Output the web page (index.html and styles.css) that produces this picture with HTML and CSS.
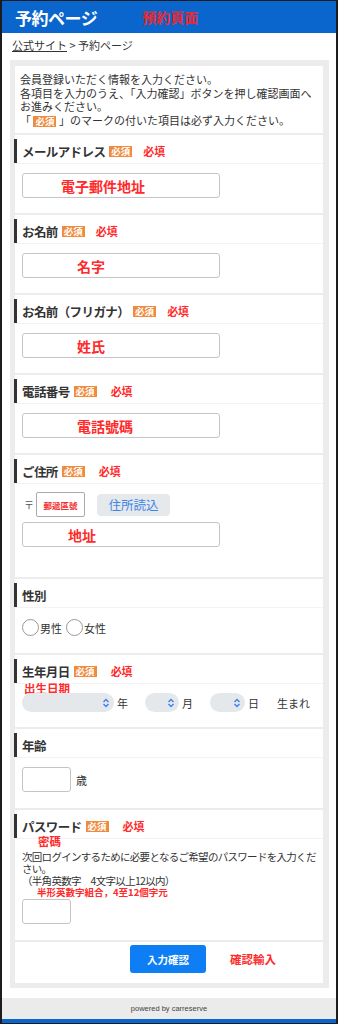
FILE: index.html
```html
<!DOCTYPE html>
<html lang="ja">
<head>
  <meta charset="UTF-8">
  <meta name="viewport" content="width=device-width, initial-scale=1.0">
  <title>予約ページ</title>
  <link rel="stylesheet" href="styles.css">
</head>
<body>
<div class="page">
  <header class="top">
    <h1>予約ページ</h1>
    <span class="note-head">預約頁面</span>
  </header>

  <div class="crumbs"><a href="#">公式サイト</a> &gt; 予約ページ</div>

  <div class="form-wrap">
    <div class="block intro">
      会員登録いただく情報を入力ください。<br>
      各項目を入力のうえ、「入力確認」ボタンを押し確認画面へ<br>
      お進みください。<br>
      「 <span class="req">必須</span> 」のマークの付いた項目は必ず入力ください。
    </div>

    <div class="block">
      <div class="label">メールアドレス<span class="req">必須</span><span class="note">必填</span></div>
      <div class="box"><span class="ph mail">電子郵件地址</span></div>
    </div>

    <div class="block">
      <div class="label">お名前<span class="req">必須</span><span class="note">必填</span></div>
      <div class="box"><span class="ph">名字</span></div>
    </div>

    <div class="block">
      <div class="label">お名前（フリガナ）<span class="req">必須</span><span class="note">必填</span></div>
      <div class="box"><span class="ph">姓氏</span></div>
    </div>

    <div class="block">
      <div class="label">電話番号<span class="req">必須</span><span class="note wide">必填</span></div>
      <div class="box"><span class="ph">電話號碼</span></div>
    </div>

    <div class="block addr">
      <div class="label">ご住所<span class="req">必須</span><span class="note wide">必填</span></div>
      <div class="zip-row">
        <span class="zip-mark">〒</span>
        <div class="zip-box">郵遞區號</div>
        <button class="zip-btn">住所読込</button>
      </div>
      <div class="box"><span class="ph addr-ph">地址</span></div>
    </div>

    <div class="block gender">
      <div class="label">性別</div>
      <div class="radios">
        <span class="radio"></span>男性
        <span class="radio"></span>女性
      </div>
    </div>

    <div class="block birth">
      <div class="label">生年月日<span class="req">必須</span><span class="note wide">必填</span></div>
      <div class="note-line">出生日期</div>
      <div class="date-row">
        <span class="sel year"><svg width="8" height="10" viewBox="0 0 8 10"><path d="M1.5 4 L4 1.5 L6.5 4 M1.5 6 L4 8.5 L6.5 6" fill="none" stroke="#3b82f0" stroke-width="1.4"/></svg></span>年
        <span class="sel month"><svg width="8" height="10" viewBox="0 0 8 10"><path d="M1.5 4 L4 1.5 L6.5 4 M1.5 6 L4 8.5 L6.5 6" fill="none" stroke="#3b82f0" stroke-width="1.4"/></svg></span>月
        <span class="sel day"><svg width="8" height="10" viewBox="0 0 8 10"><path d="M1.5 4 L4 1.5 L6.5 4 M1.5 6 L4 8.5 L6.5 6" fill="none" stroke="#3b82f0" stroke-width="1.4"/></svg></span>日
        <span class="born">生まれ</span>
      </div>
    </div>

    <div class="block age">
      <div class="label">年齢</div>
      <div class="age-row"><div class="box small"></div><span>歳</span></div>
    </div>

    <div class="block pass">
      <div class="label">パスワード<span class="req">必須</span><span class="note wide">必填</span></div>
      <div class="note-line pw">密碼</div>
      <p class="desc">次回ログインするために必要となるご希望のパスワードを入力くだ<br>さい。<br>（半角英数字　4文字以上12以内）</p>
      <div class="note-small">半形英數字組合，4至12個字元</div>
      <div class="box small"></div>
    </div>

    <div class="block submit">
      <button class="confirm">入力確認</button>
      <span class="note-confirm">確認輸入</span>
    </div>
  </div>

  <footer class="foot">powered by carreserve</footer>
  <div class="bottom-bar"></div>
</div>
</body>
</html>
```

FILE: styles.css
```css
body {
  margin: 0;
  font-family: "Noto Sans CJK JP", "Noto Sans", sans-serif;
  color: #333;
  background: #fff;
}
.page {
  width: 334px;
  border-left: 2px solid #1c1c1c;
  border-right: 2px solid #1c1c1c;
  border-top: 1px solid #1c1c1c;
  border-bottom: 1px solid #1c1c1c;
}

/* header */
.top {
  background: #0a66cc;
  height: 32px;
  display: flex;
  align-items: center;
  padding-left: 13px;
}
.top h1 {
  margin: 0;
  color: #fff;
  font-size: 17px;
  font-weight: bold;
  letter-spacing: -0.5px;
}
.note-head {
  margin-left: 45px;
  color: #f0282e;
  font-size: 14px;
  font-weight: bold;
}
.crumbs {
  height: 27px;
  line-height: 25px;
  padding-left: 10px;
  font-size: 11px;
  color: #333;
}
.crumbs a { color: #333; }

/* form */
.form-wrap {
  margin: 0 7px 0 8px;
  background: #ececec;
  padding: 6px 6px 5px 5px;
  display: flex;
  flex-direction: column;
  gap: 2px;
}
.block {
  background: #fff;
  padding: 4px 0 15px 7px;
}
.intro {
  padding: 7px 0 6px 5px;
  font-size: 11px;
  line-height: 13.5px;
}
.label {
  margin-left: -8px;
  border-left: 3px solid #333;
  height: 24px;
  padding-left: 5px;
  display: flex;
  align-items: center;
  font-size: 12.5px;
  font-weight: bold;
  letter-spacing: -0.6px;
  box-shadow: 0 1px 0 #f3f3f3;
  margin-bottom: 10px;
}
.req {
  display: inline-block;
  background: #f08a3c;
  color: #fff;
  font-size: 9.5px;
  font-weight: bold;
  line-height: 11px;
  padding: 0 2px;
  margin-left: 4px;
  letter-spacing: 0;
}
.intro .req { margin-left: 0; }
.note {
  color: #ff2a2a;
  font-size: 11px;
  font-weight: bold;
  margin-left: 11px;
  letter-spacing: 0;
}
.note.wide { margin-left: 14px; }
.box {
  width: 196px;
  height: 23px;
  border: 1px solid #c4c4c4;
  border-radius: 3px;
  display: flex;
  align-items: center;
}
.box.small { width: 47px; }
.ph {
  color: #ff2a2a;
  font-size: 14px;
  font-weight: bold;
  padding-left: 54px;
}
.ph.mail { padding-left: 38px; }
.ph.addr-ph { padding-left: 45px; }

/* address */
.addr { padding-bottom: 30px; }
.addr .label { margin-bottom: 9px; }
.zip-row {
  display: flex;
  align-items: center;
  height: 25px;
  margin-bottom: 5px;
}
.zip-mark {
  font-size: 10px;
  color: #555;
  margin: 0 2px 0 2px;
}
.zip-box {
  width: 47px;
  height: 23px;
  border: 1px solid #aaa;
  border-radius: 2px;
  color: #f03030;
  font-size: 8.5px;
  font-weight: bold;
  display: flex;
  align-items: center;
  justify-content: center;
}
.zip-btn {
  margin-left: 12px;
  width: 73px;
  height: 22px;
  border: 0;
  border-radius: 4px;
  background: #e6e9ec;
  color: #3d86e6;
  font-family: inherit;
  font-size: 12.5px;
  padding: 0;
}

/* gender */
.gender { padding-bottom: 17px; }
.gender .label { margin-bottom: 12px; }
.radios {
  display: flex;
  align-items: center;
  height: 17px;
  font-size: 11px;
}
.radio {
  width: 15px;
  height: 15px;
  border: 1px solid #999;
  border-radius: 50%;
  margin-right: 1px;
}
.radios .radio:nth-of-type(2) { margin-left: 4px; }

/* birth */
.birth .label { margin-bottom: 0; }
.note-line {
  color: #ff2a2a;
  font-size: 11.5px;
  font-weight: bold;
  height: 10px;
  line-height: 10px;
  padding-left: 2px;
}
.date-row {
  display: flex;
  align-items: center;
  height: 19px;
  font-size: 11px;
  white-space: nowrap;
}
.sel {
  height: 19px;
  border-radius: 10px;
  background: #e5e8eb;
  display: flex;
  align-items: center;
  justify-content: flex-end;
  padding-right: 4px;
  margin-right: 3px;
  box-sizing: border-box;
}
.sel.year { width: 92px; }
.sel.month { width: 34px; margin-left: 17px; }
.sel.day { width: 35px; margin-left: 17px; }
.born { margin-left: 18px; }

/* age */
.age { padding-bottom: 16px; }
.age-row {
  display: flex;
  align-items: center;
  gap: 5px;
  font-size: 11px;
}

/* password */
.pass { padding-bottom: 16px; }
.pass .label { margin-bottom: 0; }
.note-line.pw {
  margin-top: -2px;
  padding-left: 16px;
}
.desc {
  margin: 5px 0 0;
  font-size: 10.5px;
  line-height: 12px;
  letter-spacing: -0.7px;
  white-space: nowrap;
}
.note-small {
  color: #ff2a2a;
  font-size: 9.5px;
  font-weight: bold;
  line-height: 11px;
  padding-left: 15px;
  margin-bottom: 1px;
}

/* submit */
.submit {
  padding: 3px 0 10px 115px;
  display: flex;
  align-items: center;
}
.confirm {
  width: 76px;
  height: 28px;
  border: 0;
  border-radius: 3px;
  background: #0d7ef3;
  color: #fff;
  font-family: inherit;
  font-size: 10.5px;
  font-weight: bold;
  padding: 0;
}
.note-confirm {
  margin-left: 24px;
  color: #ff2a2a;
  font-size: 11.5px;
  font-weight: bold;
}

/* footer */
.foot {
  margin-top: 10px;
  background: #ebebeb;
  height: 21px;
  line-height: 21px;
  text-align: center;
  font-family: "Liberation Sans", Arial, sans-serif;
  font-size: 7.5px;
  color: #444;
}
.bottom-bar {
  height: 4px;
  background: #0a66cc;
}
```
